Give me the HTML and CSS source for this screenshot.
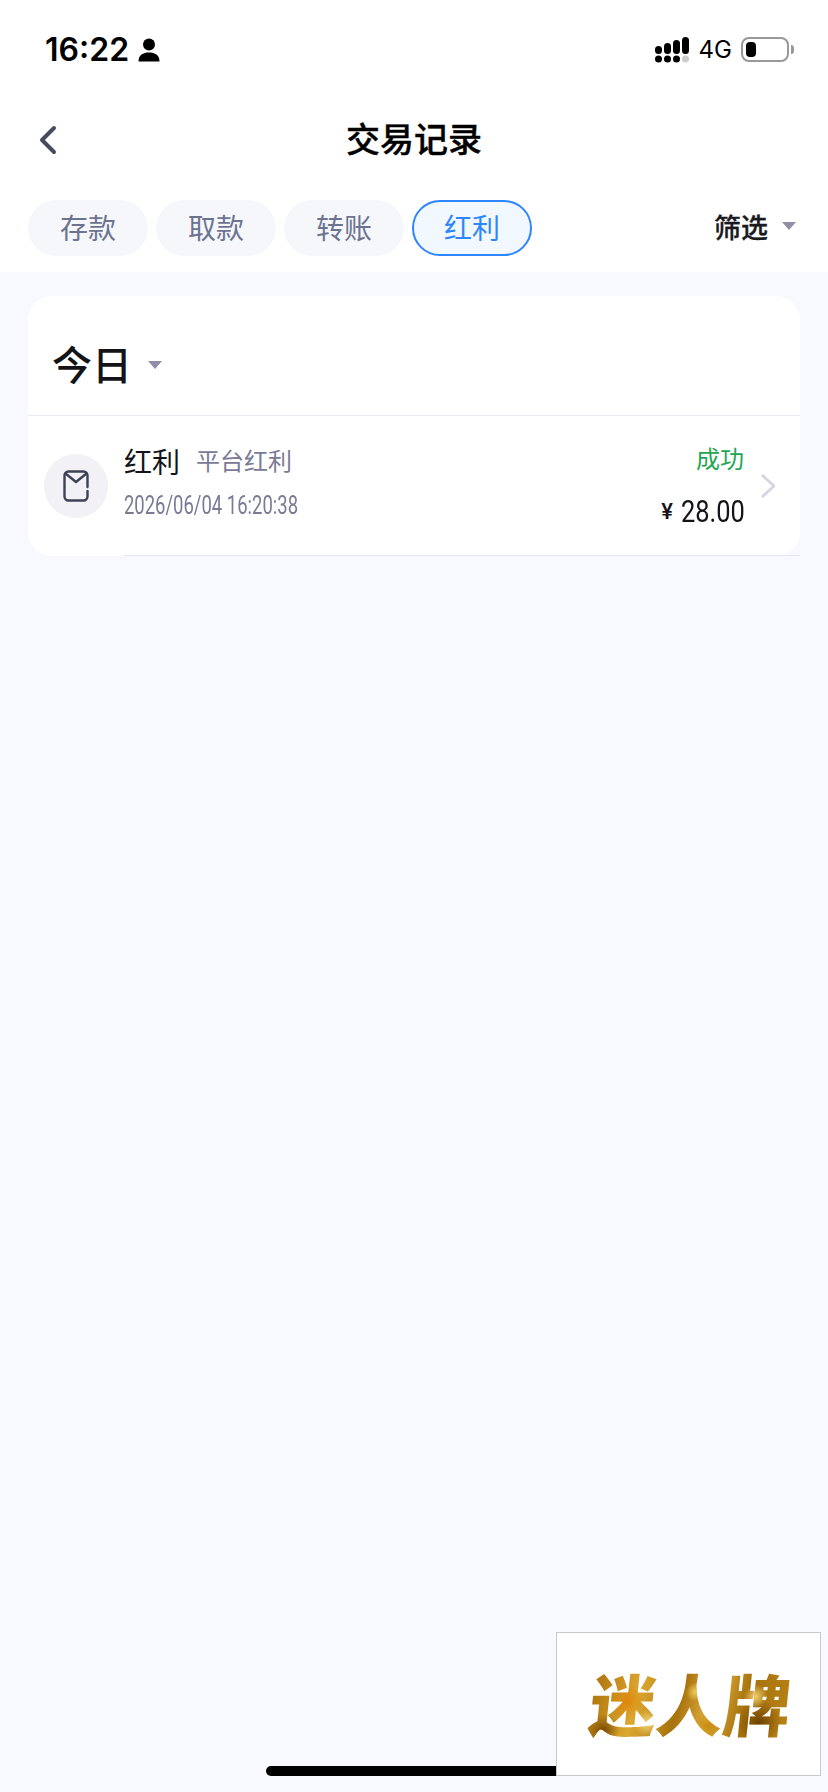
FILE: index.html
```html
<html>
  <head>
    <meta charset="utf-8">
    <title>交易记录</title>
    <link rel="stylesheet" href="styles.css">
  </head>
  <body>
    <div class="top">
      <div class="status">
        <div class="status-left">
          <span class="time">16:22</span>
          <svg class="person" width="22" height="24" viewBox="0 0 22 24">
            <circle cx="11" cy="6.5" r="6" fill="#000"/>
            <path d="M0.500 23.500 C0.500 17 5 14.500 11 14.500 C17 14.500 21.500 17 21.500 23.500 Z" fill="#000"/>
          </svg>
        </div>
        <div class="status-right">
          <svg width="34" height="26" viewBox="0 0 34 26">
            <rect x="0" y="9" width="7" height="8" rx="3.500" fill="#000"/>
            <rect x="9" y="6" width="7" height="11" rx="3.500" fill="#000"/>
            <rect x="18" y="3" width="7" height="14" rx="3.500" fill="#000"/>
            <rect x="27" y="0" width="7" height="17" rx="3.500" fill="#000"/>
            <circle cx="3.500" cy="22" r="3.500" fill="#000"/>
            <circle cx="12.500" cy="22" r="3.500" fill="#000"/>
            <circle cx="21.500" cy="22" r="3.500" fill="#000"/>
            <circle cx="30.500" cy="22" r="3.500" fill="#ccc"/>
          </svg>
          <span class="net">4G</span>
          <div class="battery"><div class="battery-level"></div></div>
          <div class="battery-nub"></div>
        </div>
      </div>
      <div class="nav">
        <svg class="back" width="20" height="30" viewBox="0 0 20 30">
          <path d="M16 3 L4 15 L16 27" fill="none" stroke="#454b60" stroke-width="4" stroke-linecap="round" stroke-linejoin="round"/>
        </svg>
        <div class="title">交易记录</div>
      </div>
      <div class="tabs">
        <div class="tab">存款</div>
        <div class="tab">取款</div>
        <div class="tab">转账</div>
        <div class="tab active">红利</div>
        <div class="filter">筛选<span class="caret"></span></div>
      </div>
    </div>

    <div class="content">
      <div class="card">
        <div class="card-head">今日<span class="caret"></span></div>
        <div class="row">
          <div class="row-icon">
            <svg width="26" height="32" viewBox="0 0 26 32">
              <path d="M24.500 17 V5.500 A4 4 0 0 0 20.500 1.500 H5.500 A4 4 0 0 0 1.500 5.500 V26.500 A4 4 0 0 0 5.500 30.500 H20.500 A4 4 0 0 0 24.500 26.500 V21" fill="none" stroke="#3d4254" stroke-width="2.400" stroke-linecap="round"/>
              <path d="M2.500 3.500 L13 12 L23.500 3.500" fill="none" stroke="#3d4254" stroke-width="2.400" stroke-linecap="round" stroke-linejoin="round"/>
            </svg>
          </div>
          <div class="row-main">
            <div class="row-title">
              <span class="row-name">红利</span>
              <span class="row-sub">平台红利</span>
            </div>
            <div class="row-date">2026/06/04 16:20:38</div>
          </div>
          <div class="row-side">
            <div class="row-state">成功</div>
            <div class="row-amount"><span class="yen">¥</span><span class="money">28.00</span></div>
          </div>
          <svg class="row-more" width="16" height="26" viewBox="0 0 16 26">
            <path d="M3 2 L15 13 L3 24" fill="none" stroke="#d5d6e2" stroke-width="3"/>
          </svg>
        </div>
      </div>
    </div>

    <div class="home-bar"></div>
    <div class="logo"><span class="logo-text">迷人牌</span></div>
  </body>
</html>
```

FILE: styles.css
```css
html, body {
  margin: 0;
  padding: 0;
}
body {
  position: relative;
  width: 828px;
  height: 1792px;
  overflow: hidden;
  background: #f8f9ff;
  font-family: "Noto Sans CJK SC", "Noto Sans", sans-serif;
  color: #141418;
}

.top {
  background: #fff;
  height: 272px;
}

.status {
  display: flex;
  justify-content: space-between;
  align-items: center;
  height: 88px;
  padding: 11px 34px 0 45px;
  box-sizing: border-box;
}
.status-left {
  display: flex;
  align-items: center;
  gap: 9px;
}
.time {
  font-family: Inter, sans-serif;
  font-size: 32px;
  font-weight: 600;
  line-height: 36px;
  color: #000;
}
.status-right {
  display: flex;
  align-items: center;
}
.net {
  font-family: Inter, sans-serif;
  font-size: 24px;
  line-height: 26px;
  margin: 0 9px 0 10px;
  color: #000;
}
.battery {
  width: 48px;
  height: 25px;
  box-sizing: border-box;
  border: 2px solid #999;
  border-radius: 8px;
  padding: 3px;
}
.battery-level {
  width: 10px;
  height: 15px;
  background: #000;
  border-radius: 4px;
}
.battery-nub {
  width: 3px;
  height: 9px;
  margin-left: 2px;
  background: #999;
  border-radius: 0 3px 3px 0;
}

.nav {
  position: relative;
  display: flex;
  align-items: center;
  justify-content: center;
  height: 104px;
  box-sizing: border-box;
  padding-bottom: 6px;
}
.back {
  position: absolute;
  left: 38px;
  top: 37px;
}
.title {
  font-size: 34px;
  font-weight: 500;
  -webkit-text-stroke: 0.4px #000;
  color: #000;
}

.tabs {
  display: flex;
  align-items: center;
  gap: 8px;
  height: 56px;
  margin-top: 8px;
  padding: 0 32px 0 28px;
}
.tab {
  width: 120px;
  height: 56px;
  line-height: 54px;
  box-sizing: border-box;
  text-align: center;
  border-radius: 28px;
  background: #f6f7fb;
  font-size: 28px;
  color: #6b7390;
}
.tab.active {
  border: 2px solid #2d86ff;
  background: #f2f8ff;
  color: #2d86ff;
  line-height: 50px;
}
.filter {
  display: flex;
  align-items: center;
  margin-left: auto;
  padding-bottom: 4px;
  font-size: 27px;
  font-weight: 500;
  -webkit-text-stroke: 0.3px #1a1a1e;
  color: #1a1a1e;
}
.caret {
  display: inline-block;
  width: 0;
  height: 0;
  border-left: 7px solid transparent;
  border-right: 7px solid transparent;
  border-top: 8px solid #8f8fa8;
}
.filter .caret {
  margin-left: 14px;
}

.content {
  padding: 24px 28px;
}
.card {
  background: #fff;
  border-radius: 24px;
}
.card-head {
  display: flex;
  align-items: center;
  height: 120px;
  box-sizing: border-box;
  padding: 14px 0 0 24px;
  border-bottom: 1px solid #e8e9f0;
  font-size: 40px;
  font-weight: 500;
}
.card-head .caret {
  margin: 4px 0 0 16px;
}

.row {
  position: relative;
  display: flex;
  align-items: center;
  height: 140px;
  box-sizing: border-box;
  padding: 0 25px 0 16px;
}
.row::after {
  content: "";
  position: absolute;
  left: 96px;
  right: 0;
  bottom: 0;
  height: 1px;
  background: #e3e7f5;
}
.row-icon {
  display: flex;
  align-items: center;
  justify-content: center;
  width: 64px;
  height: 64px;
  border-radius: 50%;
  background: #f1f1f6;
  margin-right: 16px;
}
.row-main {
  flex: 1;
  align-self: flex-start;
  padding-top: 27px;
}
.row-title {
  display: flex;
  align-items: center;
  height: 36px;
}
.row-name {
  font-size: 28px;
  margin-right: 16px;
}
.row-sub {
  font-size: 24px;
  padding-bottom: 3px;
  color: #7a7a96;
}
.row-date {
  font-family: Roboto, sans-serif;
  font-size: 26px;
  line-height: 30px;
  margin-top: 11px;
  color: #7a7a96;
  white-space: nowrap;
  transform: scaleX(0.71);
  transform-origin: left center;
}
.row-side {
  align-self: flex-start;
  padding-top: 25px;
  text-align: right;
  margin-right: 15px;
}
.row-state {
  font-size: 24px;
  line-height: 34px;
  color: #22a652;
}
.row-amount {
  display: flex;
  justify-content: flex-end;
  align-items: center;
  height: 36px;
  margin-top: 18px;
  font-family: Roboto, sans-serif;
}
.yen {
  font-size: 22px;
  font-weight: 500;
  margin-right: 8px;
}
.money {
  width: 63px;
  font-size: 31px;
  white-space: nowrap;
  transform: scaleX(0.82);
  transform-origin: left center;
}

.home-bar {
  position: absolute;
  left: 266px;
  top: 1766px;
  width: 296px;
  height: 10px;
  border-radius: 5px;
  background: #000;
}
.logo {
  position: absolute;
  left: 556px;
  top: 1632px;
  width: 265px;
  height: 144px;
  box-sizing: border-box;
  border: 1px solid #c8c8d0;
  background: #fff;
  display: flex;
  align-items: center;
  justify-content: center;
  padding: 0 0 6px 4px;
}
.logo-text {
  font-size: 67px;
  font-weight: 900;
  letter-spacing: 0;
  transform: skewX(-6deg);
  background:
    radial-gradient(circle at 18% 50%, #e0860a 0, transparent 10%),
    radial-gradient(circle at 30% 72%, #f4d878 0, transparent 9%),
    radial-gradient(circle at 52% 40%, #f0cc60 0, transparent 8%),
    radial-gradient(circle at 60% 75%, #c88a10 0, transparent 10%),
    radial-gradient(circle at 82% 45%, #f0d070 0, transparent 7%),
    radial-gradient(circle at 85% 72%, #6e4204 0, transparent 12%),
    radial-gradient(circle at 8% 80%, #7a4a06 0, transparent 8%),
    linear-gradient(100deg, #a86c08, #dca830 25%, #a8720c 45%, #e0b040 60%, #a8720c 75%, #b88418);
  -webkit-background-clip: text;
  background-clip: text;
  color: transparent;
}
```
